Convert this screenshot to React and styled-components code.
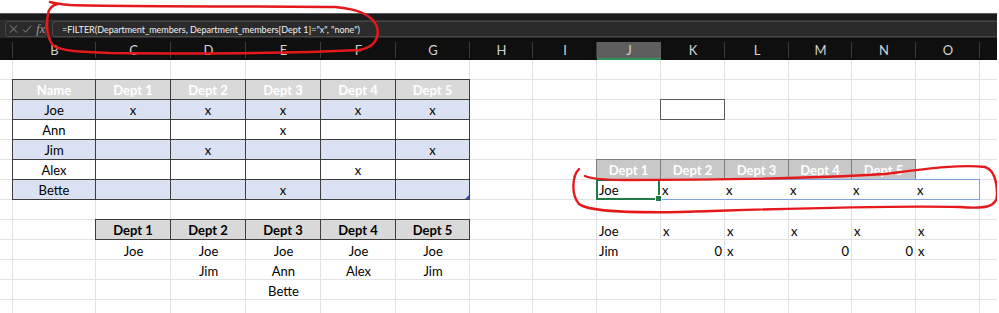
import React from "react";
import styled, { createGlobalStyle, css } from "styled-components";

const GlobalStyle = createGlobalStyle`
  * {
    margin: 0;
    padding: 0;
    box-sizing: border-box;
  }
  html, body {
    background: #fff;
    overflow: hidden;
  }
`;

// widths of columns A (partly hidden) .. O and the stub after O
const COLUMN_WIDTHS = [13, 83, 75, 75, 75, 75, 74, 63, 64, 64, 64, 64, 63, 64, 64, 17];
const TEMPLATE = COLUMN_WIDTHS.map((w) => `${w}px`).join(" ");
const LETTERS = ["", "B", "C", "D", "E", "F", "G", "H", "I", "J", "K", "L", "M", "N", "O", ""];
const ROW_COUNT = 13;

const DEPTS = ["Dept 1", "Dept 2", "Dept 3", "Dept 4", "Dept 5"];
const MEMBERS = [
  ["Joe", [1, 1, 1, 1, 1]],
  ["Ann", [0, 0, 1, 0, 0]],
  ["Jim", [0, 1, 0, 0, 1]],
  ["Alex", [0, 0, 0, 1, 0]],
  ["Bette", [0, 0, 1, 0, 0]],
];
const LISTS = [
  ["Joe", "Joe", "Joe", "Joe", "Joe"],
  ["", "Jim", "Ann", "Alex", "Jim"],
  ["", "", "Bette", "", ""],
];
const RESULT_ROWS = [
  [["Joe", "l"], ["x", "l"], ["x", "l"], ["x", "l"], ["x", "l"], ["x", "l"]],
  [["Jim", "l"], ["0", "r"], ["x", "l"], ["0", "r"], ["0", "r"], ["x", "l"]],
];

const Page = styled.div`
  position: relative;
  width: 997px;
  height: 313px;
  padding-top: 13px;
  overflow: hidden;
  font-family: Lato, "Liberation Sans", sans-serif;
`;

const Toolbar = styled.div`
  border-top: 1px solid #5d5d5d;
  padding-top: 6px;
  background: #1b1b1b;
`;

const FormulaRow = styled.div`
  display: flex;
  gap: 6px;
  height: 17px;
  padding-left: 5px;
  background: #2b2b2b;
  border-top: 1px solid #363636;
`;

const IconBox = styled.div`
  display: flex;
  align-items: center;
  gap: 4px;
  width: 41px;
  padding-left: 3px;
  border: 1px solid #474747;
  border-radius: 3px;
  color: #8d8d8d;
`;

const FxLabel = styled.span`
  font-family: "Liberation Serif", serif;
  font-style: italic;
  font-size: 12px;
  color: #a0a0a0;
`;

const FormulaInput = styled.div`
  flex: 1;
  display: flex;
  align-items: center;
  padding-left: 9px;
  border: 1px solid #474747;
  border-right: none;
  border-radius: 3px 0 0 3px;
  font-size: 9px;
  color: #f2f2f2;
  white-space: nowrap;
`;

const ColumnHeader = styled.div`
  display: grid;
  grid-template-columns: ${TEMPLATE};
  height: 23px;
  background: #0f0f0f;
  border-top: 1px solid #2a2a2a;
`;

const ColLetter = styled.div`
  display: flex;
  align-items: center;
  justify-content: center;
  padding-top: 4px;
  font-size: 13px;
  color: #d2d2d2;
  background: ${(p) =>
    p.$selected
      ? "linear-gradient(#5e5e5e, #5e5e5e) 0 4px / 100% calc(100% - 4px) no-repeat"
      : p.$last
      ? "none"
      : "linear-gradient(#3c3c3c, #3c3c3c) right 4px / 1px calc(100% - 4px) no-repeat"};
  border-bottom: 2px solid ${(p) => (p.$selected ? "#2e9158" : "transparent")};
`;

const Sheet = styled.div`
  display: grid;
  grid-template-columns: ${TEMPLATE};
  grid-template-rows: repeat(${ROW_COUNT}, 20px);
  font-size: 13px;
  color: #000;
`;

const Lines = styled.div`
  grid-area: 1 / 1 / -1 / -1;
  display: grid;
  grid-template-columns: ${TEMPLATE};
  grid-template-rows: repeat(${ROW_COUNT}, 20px);
`;

const GridCell = styled.div`
  border-right: 1px solid #e2e2e2;
  border-bottom: 1px solid #e2e2e2;
  &:nth-child(16n) {
    border-right: none;
  }
`;

const placed = css`
  grid-row: ${(p) => p.$row};
  grid-column: ${(p) => p.$col};
  margin: -1px 0 0 -1px;
  z-index: 1;
`;

const MembersTable = styled.div`
  ${placed}
  position: relative;
  display: grid;
  grid-template-columns: 83px repeat(4, 75px) 74px;
  grid-template-rows: repeat(6, 20px);
  border-top: 1px solid #3d3d3d;
  border-left: 1px solid #3d3d3d;

  &::after {
    content: "";
    position: absolute;
    right: 1px;
    bottom: 1px;
    border: 2px solid transparent;
    border-right-color: #3556b8;
    border-bottom-color: #3556b8;
  }
`;

const TONES = {
  head: { bg: "#d9d9d9", fg: "#ffffff", weight: 700 },
  band: { bg: "#d9e1f2", fg: "#000000", weight: 400 },
  plain: { bg: "#ffffff", fg: "#000000", weight: 400 },
};

const TableCell = styled.div`
  display: flex;
  align-items: center;
  justify-content: center;
  padding-top: 1px;
  border-right: 1px solid #3d3d3d;
  border-bottom: 1px solid #3d3d3d;
  background: ${(p) => TONES[p.$tone].bg};
  color: ${(p) => TONES[p.$tone].fg};
  font-weight: ${(p) => TONES[p.$tone].weight};
`;

const ListTable = styled.div`
  ${placed}
  display: grid;
  grid-template-columns: 76px 75px 75px 75px 74px;
  grid-template-rows: 21px repeat(3, 20px);
`;

const ListHead = styled.div`
  display: flex;
  align-items: center;
  justify-content: center;
  padding-top: 1px;
  background: #d9d9d9;
  border-top: 1px solid #3d3d3d;
  border-right: 1px solid #3d3d3d;
  border-bottom: 1px solid #3d3d3d;
  font-weight: 700;
  &:first-child {
    border-left: 1px solid #3d3d3d;
  }
`;

const ListCell = styled.div`
  display: flex;
  align-items: center;
  justify-content: center;
  padding: 1px 0 0 ${(p) => (p.$first ? "1px" : "0")};
`;

const EmptyBox = styled.div`
  ${placed}
  border: 1px solid #5a5a5a;
  background: #fff;
`;

const ResultHeader = styled.div`
  ${placed}
  display: grid;
  grid-template-columns: 64px 64px 64px 63px 64px;
  border-top: 1px solid #7c7c7c;
  border-left: 1px solid #7c7c7c;
`;

const ResultHeadCell = styled.div`
  display: flex;
  align-items: center;
  justify-content: center;
  padding-top: 1px;
  background: #c8c8c8;
  border-right: 1px solid #7c7c7c;
  border-bottom: 1px solid #7c7c7c;
  color: #fff;
  font-weight: 700;
`;

const SpillRow = styled.div`
  ${placed}
  display: grid;
  grid-template-columns: 63px 64px 64px 63px 64px 64px;
  border: 1px solid #7fa3d9;
  background: #fff;
`;

const ActiveCell = styled.div`
  position: relative;
  display: flex;
  align-items: center;
  margin: -1px 0 -1px -1px;
  padding-left: 1px;
  border: 2px solid #1f7a46;

  &::after {
    content: "";
    position: absolute;
    right: -4px;
    bottom: -4px;
    width: 5px;
    height: 5px;
    background: #1f7a46;
    border: 1px solid #fff;
  }
`;

const ValueCell = styled.div`
  display: flex;
  align-items: center;
  justify-content: ${(p) => (p.$align === "r" ? "flex-end" : "flex-start")};
  padding: 1px 3px 0 2px;
`;

const ResultRows = styled.div`
  ${placed}
  display: grid;
  grid-template-columns: 64px 64px 64px 63px 64px 64px;
  grid-template-rows: repeat(2, 20px);
  margin: 0;
`;

const Annotation = styled.svg`
  position: absolute;
  left: 0;
  top: 0;
  z-index: 5;
  pointer-events: none;
  fill: none;
  stroke: #e5191c;
  stroke-width: 2.4;
  stroke-linecap: round;
  stroke-linejoin: round;
`;

function App() {
  return (
    <Page>
      <GlobalStyle />

      <Toolbar>
        <FormulaRow>
          <IconBox>
            <svg width="10" height="10" viewBox="0 0 10 10" stroke="currentColor" strokeWidth="1">
              <path d="M1 1L9 9M9 1L1 9" />
            </svg>
            <svg width="11" height="10" viewBox="0 0 11 10" stroke="currentColor" strokeWidth="1" fill="none">
              <path d="M1 5.5L4 8.5L10 1.5" />
            </svg>
            <FxLabel>fx</FxLabel>
          </IconBox>
          <FormulaInput>=FILTER(Department_members, Department_members[Dept 1]="x", "none")</FormulaInput>
        </FormulaRow>
      </Toolbar>

      <ColumnHeader>
        {LETTERS.map((l, i) => (
          <ColLetter key={i} $selected={l === "J"} $last={i === LETTERS.length - 1}>
            {l}
          </ColLetter>
        ))}
      </ColumnHeader>

      <Sheet>
        <Lines>
          {Array.from({ length: ROW_COUNT * COLUMN_WIDTHS.length }, (_, i) => (
            <GridCell key={i} />
          ))}
        </Lines>

        <MembersTable $row="2 / span 6" $col="2 / span 6">
          <TableCell $tone="head">Name</TableCell>
          {DEPTS.map((d) => (
            <TableCell key={d} $tone="head">{d}</TableCell>
          ))}
          {MEMBERS.map(([name, marks], r) => {
            const tone = r % 2 === 0 ? "band" : "plain";
            return (
              <React.Fragment key={name}>
                <TableCell $tone={tone}>{name}</TableCell>
                {marks.map((m, c) => (
                  <TableCell key={c} $tone={tone}>{m ? "x" : ""}</TableCell>
                ))}
              </React.Fragment>
            );
          })}
        </MembersTable>

        <ListTable $row="9 / span 4" $col="3 / span 5">
          {DEPTS.map((d) => (
            <ListHead key={d}>{d}</ListHead>
          ))}
          {LISTS.map((row, r) =>
            row.map((name, c) => (
              <ListCell key={`${r}-${c}`} $first={c === 0}>{name}</ListCell>
            ))
          )}
        </ListTable>

        <EmptyBox $row="3" $col="11" />

        <ResultHeader $row="6" $col="10 / span 5">
          {DEPTS.map((d) => (
            <ResultHeadCell key={d}>{d}</ResultHeadCell>
          ))}
        </ResultHeader>

        <SpillRow $row="7" $col="10 / span 6">
          <ActiveCell>Joe</ActiveCell>
          {["x", "x", "x", "x", "x"].map((v, i) => (
            <ValueCell key={i}>{v}</ValueCell>
          ))}
        </SpillRow>

        <ResultRows $row="9 / span 2" $col="10 / span 6">
          {RESULT_ROWS.map((row, r) =>
            row.map(([v, align], c) => (
              <ValueCell key={`${r}-${c}`} $align={align}>{v}</ValueCell>
            ))
          )}
        </ResultRows>
      </Sheet>

      <Annotation width="999" height="313" viewBox="0 0 999 313">
        <path d="M50 2 C54 3 58 4 70 5 C140 7 260 6 335 7 C360 9 373 16 377 27 C380 39 373 48 359 50 C300 53 200 54 110 53 C80 52 62 51 54 46 C47 40 46 25 48 14 C49 8 52 5 58 4" />
        <path d="M579 169 C572 176 571 195 579 204 C588 211 620 213 680 212 C780 209 880 205 960 207 C985 209 997 207 997 195 C997 180 994 170 985 167 C960 164 925 169 885 174 C800 179 700 180 625 180 C605 180 592 179 585 176" />
      </Annotation>
    </Page>
  );
}

export default App;
